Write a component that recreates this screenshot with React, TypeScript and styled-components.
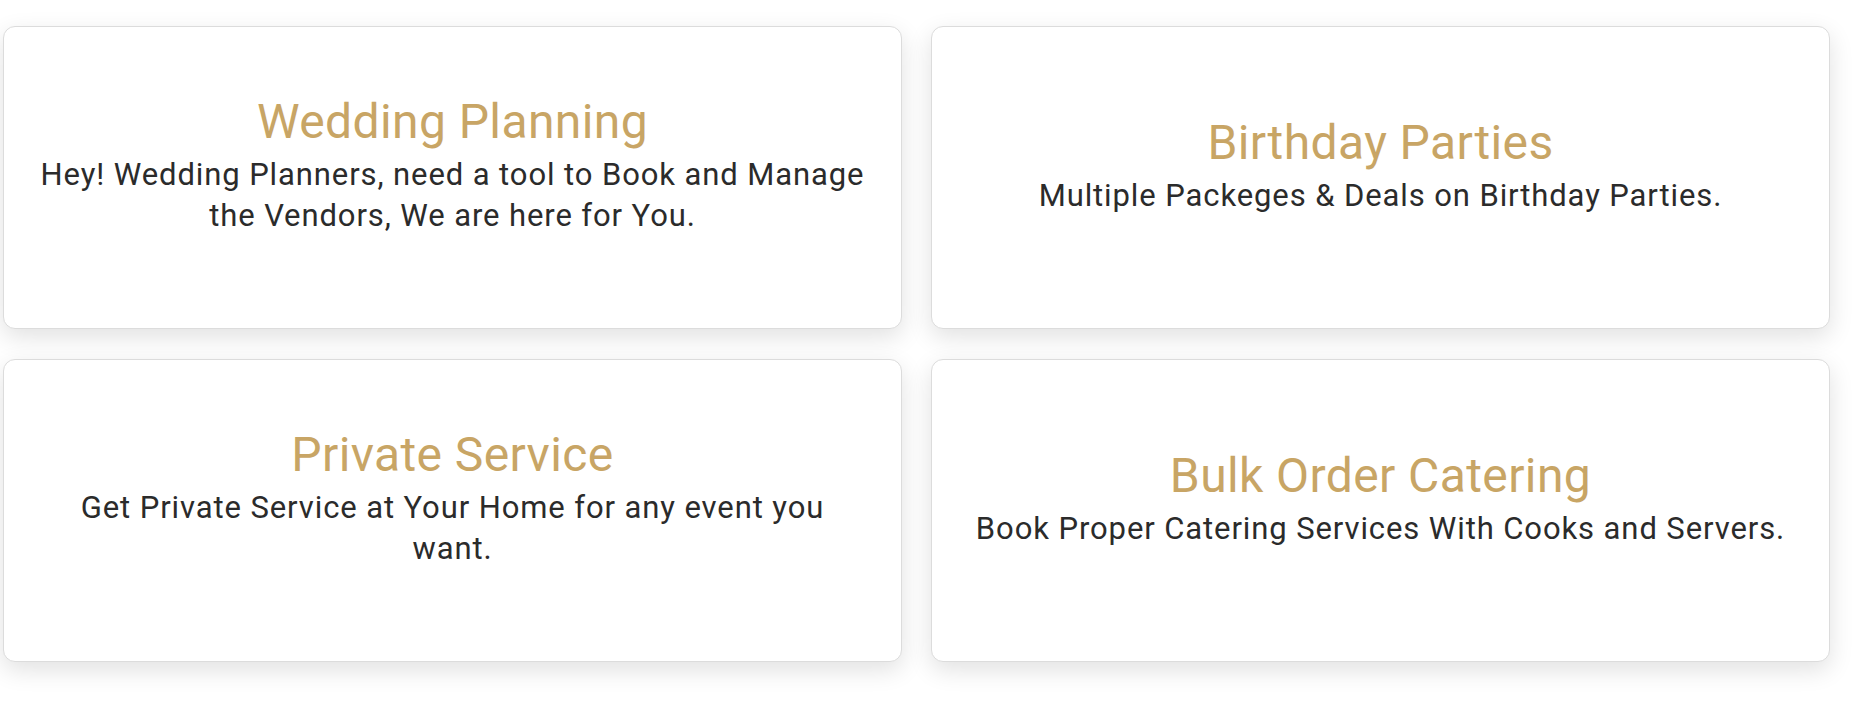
import React from "react";
import styled, { createGlobalStyle } from "styled-components";

const Global = createGlobalStyle`
  html, body { margin: 0; padding: 0; background: #ffffff; }
  body { font-family: Roboto, "Liberation Sans", sans-serif; }
`;

const Grid = styled.div`
  display: grid;
  grid-template-columns: repeat(2, 899px);
  grid-auto-rows: 303px;
  column-gap: 29px;
  row-gap: 30px;
  padding: 26px 0 44px 3px;
`;

const Card = styled.div`
  box-sizing: border-box;
  display: flex;
  flex-direction: column;
  justify-content: center;
  align-items: center;
  text-align: center;
  padding: 0 35px 29px;
  background: #fff;
  border: 1px solid #dcdcdc;
  border-radius: 12px;
  box-shadow: 0 8px 24px rgba(0, 0, 0, 0.12);
`;

const Title = styled.h2`
  margin: 0;
  font-family: Roboto, "Liberation Sans", sans-serif;
  font-weight: 400;
  font-size: 48px;
  line-height: 64px;
  letter-spacing: 0.4px;
  color: #c8a565;
`;

const Text = styled.p`
  margin: 0;
  font-family: Roboto, "Liberation Sans", sans-serif;
  font-weight: 400;
  font-size: 31px;
  line-height: 41px;
  letter-spacing: 0.9px;
  color: #2b2b2b;
`;

const items = [
  {
    title: "Wedding Planning",
    text: "Hey! Wedding Planners, need a tool to Book and Manage the Vendors, We are here for You.",
  },
  { title: "Birthday Parties", text: "Multiple Packeges & Deals on Birthday Parties." },
  { title: "Private Service", text: "Get Private Service at Your Home for any event you want." },
  { title: "Bulk Order Catering", text: "Book Proper Catering Services With Cooks and Servers." },
];

export default function App() {
  return (
    <>
      <Global />
      <Grid>
        {items.map((it) => (
          <Card key={it.title}>
            <Title>{it.title}</Title>
            <Text>{it.text}</Text>
          </Card>
        ))}
      </Grid>
    </>
  );
}
